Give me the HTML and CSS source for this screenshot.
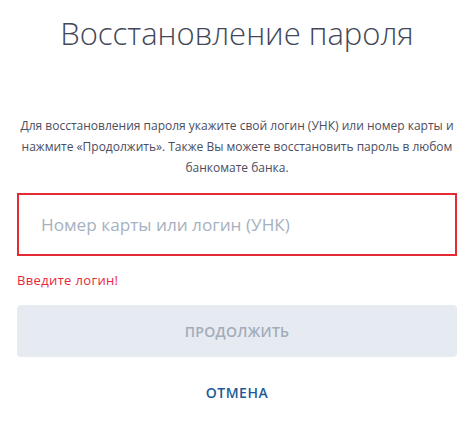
FILE: index.html
```html
<!DOCTYPE html>
<html lang="ru">
<head>
<meta charset="utf-8">
<title>Восстановление пароля</title>
<link rel="stylesheet" href="styles.css">
</head>
<body>
<main class="recovery">
  <h1 class="recovery__title">Восстановление пароля</h1>
  <p class="recovery__hint">Для восстановления пароля укажите свой логин (УНК) или номер карты и нажмите «Продолжить». Также Вы можете восстановить пароль в любом банкомате банка.</p>
  <form class="recovery__form">
    <input class="recovery__input recovery__input--error" type="text" placeholder="Номер карты или логин (УНК)">
    <div class="recovery__error">Введите логин!</div>
    <button class="recovery__submit" type="button" disabled>Продолжить</button>
    <a class="recovery__cancel" href="#">Отмена</a>
  </form>
</main>
</body>
</html>
```

FILE: styles.css
```css
html, body {
  margin: 0;
  padding: 0;
  background: #ffffff;
}

body {
  font-family: "Open Sans", "Liberation Sans", sans-serif;
  color: #454a5c;
}

.recovery {
  padding: 0 17px;
  display: flex;
  flex-direction: column;
}

.recovery__title {
  margin: 11px 0 0;
  font-size: 31px;
  line-height: 44px;
  font-weight: 300;
  text-align: center;
  color: #424759;
}

.recovery__hint {
  margin: 60px 0 0;
  font-size: 12px;
  line-height: 21px;
  text-align: center;
  color: #4a4d5e;
}

.recovery__form {
  margin-top: 15px;
  display: flex;
  flex-direction: column;
}

.recovery__input {
  box-sizing: border-box;
  height: 63px;
  width: 100%;
  margin: 0;
  padding: 0 22px;
  border: 2px solid #e52a35;
  border-radius: 0;
  font-family: inherit;
  font-size: 17.2px;
  color: #454a5c;
  outline: none;
}

.recovery__input::placeholder {
  color: #a7b1c0;
}

.recovery__error {
  margin-top: 15px;
  font-size: 13px;
  line-height: 18px;
  letter-spacing: 0.35px;
  color: #e8283a;
}

.recovery__submit {
  margin-top: 16px;
  height: 52px;
  border: 0;
  border-radius: 4px;
  background: #e6eaf1;
  font-family: inherit;
  font-size: 14px;
  font-weight: 600;
  letter-spacing: 0.3px;
  text-transform: uppercase;
  color: #a2acba;
}

.recovery__cancel {
  align-self: center;
  margin-top: 26px;
  font-size: 14px;
  line-height: 20px;
  font-weight: 600;
  letter-spacing: 0.5px;
  text-transform: uppercase;
  text-decoration: none;
  color: #1d5b97;
}
```
